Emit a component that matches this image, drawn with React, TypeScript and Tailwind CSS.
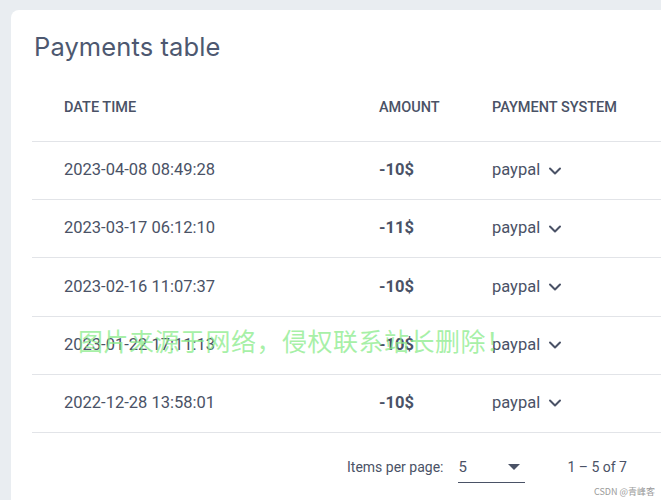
import { ChevronDown } from 'lucide-react';

interface Payment {
  date: string;
  amount: string;
  system: string;
}

const payments: Payment[] = [
  { date: '2023-04-08 08:49:28', amount: '-10$', system: 'paypal' },
  { date: '2023-03-17 06:12:10', amount: '-11$', system: 'paypal' },
  { date: '2023-02-16 11:07:37', amount: '-10$', system: 'paypal' },
  { date: '2023-01-22 17:11:13', amount: '-10$', system: 'paypal' },
  { date: '2022-12-28 13:58:01', amount: '-10$', system: 'paypal' },
];

const App = () => {
  return (
    <div className="relative h-[500px] w-[661px] overflow-hidden bg-[#e9edf1] pl-[11px] pt-[10px] font-['Roboto',sans-serif] text-[#4a5266]">
      <div className="h-[520px] w-[700px] rounded-lg bg-white pl-[21px] pt-[21px]">
        <h1 className="pl-[2px] font-['Inter',sans-serif] text-[25.5px] leading-8 font-normal tracking-[0.1px] text-[#4d5870]">
          Payments table
        </h1>

        <div className="mt-[11px] w-[680px]">
          <div className="flex h-[68px] items-center border-b border-[#e2e4e8] pt-[1px] text-[14.5px] font-medium uppercase">
            <div className="w-[347px] pl-[32px]">Date time</div>
            <div className="w-[113px]">Amount</div>
            <div className="flex-1">Payment system</div>
          </div>

          {payments.map((p) => (
            <div
              key={p.date}
              className="flex h-[58.2px] items-center border-b border-[#e2e4e8] text-[16.5px]"
            >
              <div className="w-[347px] pl-[32px]">{p.date}</div>
              <div className="w-[113px] font-bold">{p.amount}</div>
              <div className="flex flex-1 items-center gap-[5px]">
                {p.system}
                <ChevronDown size={20} strokeWidth={2.4} />
              </div>
            </div>
          ))}

          <div className="flex h-[70px] items-center pl-[315px] text-[14px]">
            <span>Items per page:</span>
            <div className="ml-[15px] flex h-[30px] w-[67px] items-center justify-between border-b border-[#4a5266] pr-[5px]">
              <span className="text-[15px]">5</span>
              <span className="h-0 w-0 border-x-[6px] border-t-[6px] border-x-transparent border-t-[#4a5266]" />
            </div>
            <span className="ml-[42px]">1 – 5 of 7</span>
          </div>
        </div>
      </div>

      <div className="absolute left-[78px] top-[326px] font-['Noto_Sans_CJK_SC',sans-serif] text-[25px] leading-7 font-normal tracking-[0.5px] text-[#8aeb8a]/75">
        图片来源于网络，侵权联系站长删除！
      </div>
      <div className="absolute right-[6px] top-[485px] font-['Noto_Sans_CJK_SC',sans-serif] text-[9px] text-[#9a9a9a]">
        CSDN @青峰客
      </div>
    </div>
  );
};

export default App;
